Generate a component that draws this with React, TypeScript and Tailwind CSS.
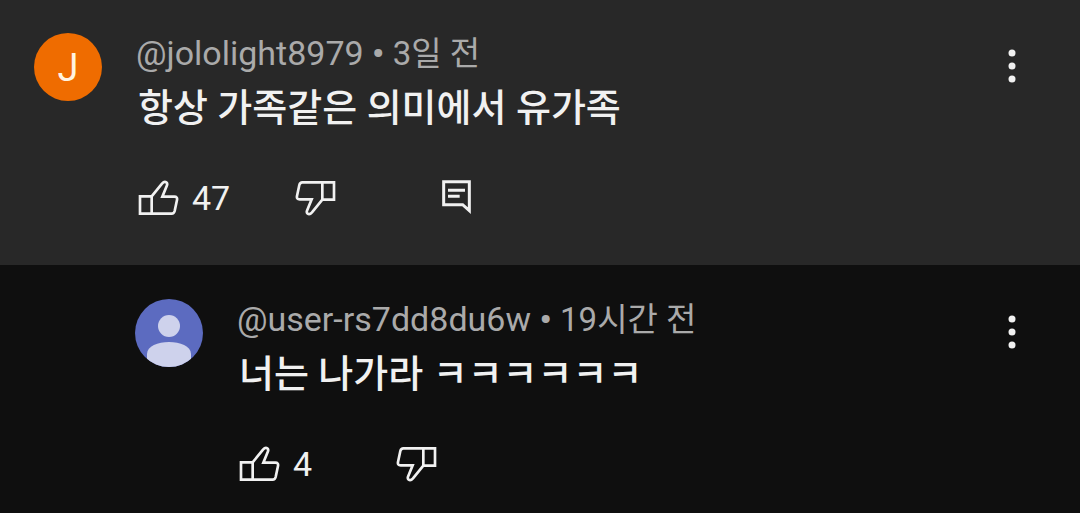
type Comment = {
  author: string
  time: string
  text: string
  likes: number
  initial?: string
  reply?: boolean
}

const comments: Comment[] = [
  { author: '@jololight8979', time: '3일 전', text: '항상 가족같은 의미에서 유가족', likes: 47, initial: 'J' },
  { author: '@user-rs7dd8du6w', time: '19시간 전', text: '너는 나가라 ㅋㅋㅋㅋㅋㅋ', likes: 4, reply: true },
]

function ThumbIcon({ down = false }: { down?: boolean }) {
  return (
    <svg
      viewBox="0 0 126 108"
      className={down ? 'h-9 w-[42px] shrink-0 rotate-180' : 'h-9 w-[42px] shrink-0'}
      fill="none"
      stroke="currentColor"
      strokeWidth="8"
      aria-hidden="true"
    >
      <path d="M41 49L72 11Q79 3 85 7Q89 10 87 16L73 50H109Q119 50 117 60L110 93Q108 101 101 101H6V49H41V101" />
    </svg>
  )
}

function ReplyIcon() {
  return (
    <svg viewBox="0 0 90 108" className="h-9 w-[30px]" fill="none" stroke="currentColor" strokeWidth="9" aria-hidden="true">
      <path d="M5 5H82V92L62 74H5Z" />
      <path d="M18 31H69M18 49H53" />
    </svg>
  )
}

function MoreIcon() {
  return (
    <svg viewBox="0 0 8 34" className="h-[34px] w-2" fill="currentColor" aria-hidden="true">
      <circle cx="4" cy="4" r="3.5" />
      <circle cx="4" cy="17" r="3.5" />
      <circle cx="4" cy="30" r="3.5" />
    </svg>
  )
}

function Avatar({ initial }: { initial?: string }) {
  if (initial) {
    return (
      <div className="flex size-[68px] shrink-0 items-center justify-center rounded-full bg-[#ef6c00] pt-0.5 text-[38px] leading-none text-[#fff3e0]">
        {initial}
      </div>
    )
  }
  return (
    <div className="size-[68px] shrink-0 overflow-hidden rounded-full bg-[#5c6bc0] text-[#ced2ec]">
      <svg viewBox="0 0 68 68" className="size-full" fill="currentColor" aria-hidden="true">
        <circle cx="34" cy="27" r="11" />
        <path d="M12 68V55C12 47 23 43 34 43S56 47 56 55V68Z" />
      </svg>
    </div>
  )
}

function CommentItem({ comment }: { comment: Comment }) {
  const { author, time, text, likes, initial, reply } = comment
  return (
    <article
      className={
        reply
          ? 'flex gap-[34px] bg-[#0f0f0f] pt-[34px] pr-16 pb-[30px] pl-[135px]'
          : 'flex gap-[34px] bg-[#282828] pt-[33px] pr-16 pb-[49px] pl-[34px]'
      }
    >
      <Avatar initial={initial} />
      <div className="min-w-0 flex-1">
        <div className="text-[34px] leading-10 text-[#aaaaaa]">
          {author} <span className="font-bold">•</span> <span className="text-[33px] leading-none">{time}</span>
        </div>
        <p className="mt-[9px] pl-0.5 text-[38px] leading-[52px] font-medium text-[#f1f1f1]">{text}</p>
        <div className="mt-[46px] flex h-9 items-center pl-0.5 text-[34px] leading-9">
          <button type="button" aria-label={`좋아요 ${likes}`} className="flex w-[156px] items-center gap-3">
            <ThumbIcon />
            {likes}
          </button>
          <button type="button" aria-label="싫어요" className="w-[148px]">
            <ThumbIcon down />
          </button>
          {!reply && (
            <button type="button" aria-label="답글">
              <ReplyIcon />
            </button>
          )}
        </div>
      </div>
      <button type="button" aria-label="더보기" className="mt-4 self-start">
        <MoreIcon />
      </button>
    </article>
  )
}

export default function App() {
  return (
    <main className="min-h-screen bg-[#0f0f0f] font-[Roboto,'Noto_Sans_CJK_KR',sans-serif] text-[#f1f1f1]">
      {comments.map((comment) => (
        <CommentItem key={comment.author} comment={comment} />
      ))}
    </main>
  )
}
